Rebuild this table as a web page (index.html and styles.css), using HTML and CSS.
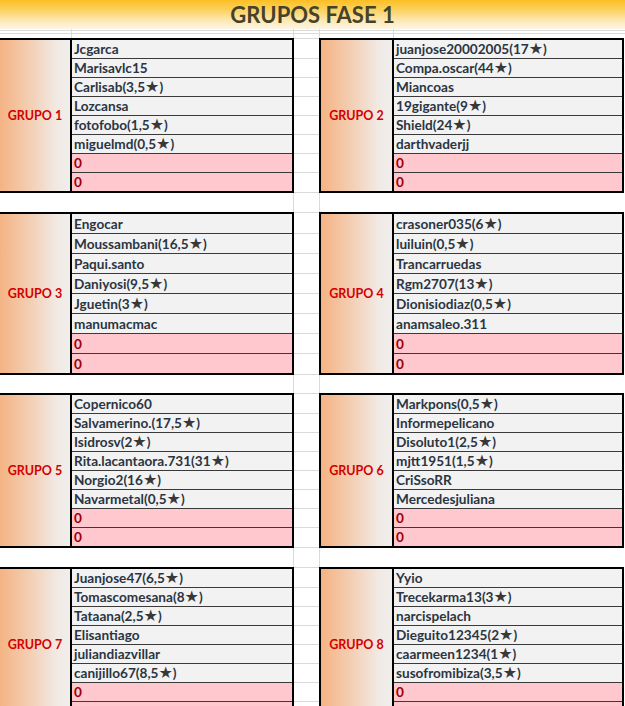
FILE: index.html
```html
<!DOCTYPE html>
<html lang="es">
<head>
<meta charset="utf-8">
<title>Grupos Fase 1</title>
<link rel="stylesheet" href="styles.css">
</head>
<body>
<div class="sheet">
  <div class="title">GRUPOS FASE 1</div>
  <div class="headgrid">
    <div class="hg hg1"></div>
    <div class="hg hg2"></div>
    <div class="hg hg3"></div>
  </div>

  <div class="band r19">
    <div class="block left">
      <div class="label">GRUPO 1</div>
      <div class="names">
        <div class="row">Jcgarca</div>
        <div class="row">Marisavlc15</div>
        <div class="row">Carlisab(3,5<span class="star">★</span>)</div>
        <div class="row">Lozcansa</div>
        <div class="row">fotofobo(1,5<span class="star">★</span>)</div>
        <div class="row">miguelmd(0,5<span class="star">★</span>)</div>
        <div class="row zero">0</div>
        <div class="row zero">0</div>
      </div>
    </div>
    <div class="gapcol"><div class="gc"></div><div class="gc"></div><div class="gc"></div><div class="gc"></div><div class="gc"></div><div class="gc"></div><div class="gc"></div><div class="gc"></div></div>
    <div class="block right">
      <div class="label">GRUPO 2</div>
      <div class="names">
        <div class="row">juanjose20002005(17<span class="star">★</span>)</div>
        <div class="row">Compa.oscar(44<span class="star">★</span>)</div>
        <div class="row">Miancoas</div>
        <div class="row">19gigante(9<span class="star">★</span>)</div>
        <div class="row">Shield(24<span class="star">★</span>)</div>
        <div class="row">darthvaderjj</div>
        <div class="row zero">0</div>
        <div class="row zero">0</div>
      </div>
    </div>
  </div>
  <div class="spacer s19"></div>

  <div class="band r20">
    <div class="block left">
      <div class="label">GRUPO 3</div>
      <div class="names">
        <div class="row">Engocar</div>
        <div class="row">Moussambani(16,5<span class="star">★</span>)</div>
        <div class="row">Paqui.santo</div>
        <div class="row">Daniyosi(9,5<span class="star">★</span>)</div>
        <div class="row">Jguetin(3<span class="star">★</span>)</div>
        <div class="row">manumacmac</div>
        <div class="row zero">0</div>
        <div class="row zero">0</div>
      </div>
    </div>
    <div class="gapcol"><div class="gc"></div><div class="gc"></div><div class="gc"></div><div class="gc"></div><div class="gc"></div><div class="gc"></div><div class="gc"></div><div class="gc"></div></div>
    <div class="block right">
      <div class="label">GRUPO 4</div>
      <div class="names">
        <div class="row">crasoner035(6<span class="star">★</span>)</div>
        <div class="row">luiluin(0,5<span class="star">★</span>)</div>
        <div class="row">Trancarruedas</div>
        <div class="row">Rgm2707(13<span class="star">★</span>)</div>
        <div class="row">Dionisiodiaz(0,5<span class="star">★</span>)</div>
        <div class="row">anamsaleo.311</div>
        <div class="row zero">0</div>
        <div class="row zero">0</div>
      </div>
    </div>
  </div>
  <div class="spacer s18"></div>

  <div class="band r19">
    <div class="block left">
      <div class="label">GRUPO 5</div>
      <div class="names">
        <div class="row">Copernico60</div>
        <div class="row">Salvamerino.(17,5<span class="star">★</span>)</div>
        <div class="row">Isidrosv(2<span class="star">★</span>)</div>
        <div class="row">Rita.lacantaora.731(31<span class="star">★</span>)</div>
        <div class="row">Norgio2(16<span class="star">★</span>)</div>
        <div class="row">Navarmetal(0,5<span class="star">★</span>)</div>
        <div class="row zero">0</div>
        <div class="row zero">0</div>
      </div>
    </div>
    <div class="gapcol"><div class="gc"></div><div class="gc"></div><div class="gc"></div><div class="gc"></div><div class="gc"></div><div class="gc"></div><div class="gc"></div><div class="gc"></div></div>
    <div class="block right">
      <div class="label">GRUPO 6</div>
      <div class="names">
        <div class="row">Markpons(0,5<span class="star">★</span>)</div>
        <div class="row">Informepelicano</div>
        <div class="row">Disoluto1(2,5<span class="star">★</span>)</div>
        <div class="row">mjtt1951(1,5<span class="star">★</span>)</div>
        <div class="row">CriSsoRR</div>
        <div class="row">Mercedesjuliana</div>
        <div class="row zero">0</div>
        <div class="row zero">0</div>
      </div>
    </div>
  </div>
  <div class="spacer s19"></div>

  <div class="band r19">
    <div class="block left">
      <div class="label">GRUPO 7</div>
      <div class="names">
        <div class="row">Juanjose47(6,5<span class="star">★</span>)</div>
        <div class="row">Tomascomesana(8<span class="star">★</span>)</div>
        <div class="row">Tataana(2,5<span class="star">★</span>)</div>
        <div class="row">Elisantiago</div>
        <div class="row">juliandiazvillar</div>
        <div class="row">canijillo67(8,5<span class="star">★</span>)</div>
        <div class="row zero">0</div>
        <div class="row zero">0</div>
      </div>
    </div>
    <div class="gapcol"><div class="gc"></div><div class="gc"></div><div class="gc"></div><div class="gc"></div><div class="gc"></div><div class="gc"></div><div class="gc"></div><div class="gc"></div></div>
    <div class="block right">
      <div class="label">GRUPO 8</div>
      <div class="names">
        <div class="row">Yyio</div>
        <div class="row">Trecekarma13(3<span class="star">★</span>)</div>
        <div class="row">narcispelach</div>
        <div class="row">Dieguito12345(2<span class="star">★</span>)</div>
        <div class="row">caarmeen1234(1<span class="star">★</span>)</div>
        <div class="row">susofromibiza(3,5<span class="star">★</span>)</div>
        <div class="row zero">0</div>
        <div class="row zero">0</div>
      </div>
    </div>
  </div>
</div>
</body>
</html>
```

FILE: styles.css
```css
html, body {
  margin: 0;
  padding: 0;
  overflow: hidden;
  background: #fff;
}

.sheet {
  width: 625px;
  height: 706px;
  overflow: hidden;
  font-family: Lato, "Liberation Sans", sans-serif;
  background:
    linear-gradient(#dadada, #dadada) 293px 0 / 1px 100% no-repeat,
    linear-gradient(#dadada, #dadada) 319px 0 / 1px 100% no-repeat,
    #fff;
}

.title {
  height: 29px;
  display: flex;
  align-items: center;
  justify-content: center;
  background: linear-gradient(#fbbf22 0%, #fbd260 35%, #fde8b4 70%, #fdf6e6 100%);
  color: #46422a;
  font-weight: 700;
  font-size: 22px;
  line-height: 29px;
}

.headgrid {
  height: 9px;
  background:
    linear-gradient(#dadada, #dadada) 71px 0 / 1px 100% no-repeat,
    linear-gradient(#dadada, #dadada) 293px 0 / 1px 100% no-repeat,
    linear-gradient(#dadada, #dadada) 319px 0 / 1px 100% no-repeat,
    linear-gradient(#dadada, #dadada) 393px 0 / 1px 100% no-repeat;
}

.hg { box-sizing: border-box; }
.hg1 { height: 2px; border-bottom: 1px solid #dadada; }
.hg2 { height: 3px; border-bottom: 1px solid #dadada; }
.hg3 { height: 4px; }

.band {
  display: flex;
}
.r19 { --rh: 19px; }
.r20 { --rh: 20px; }

.s19 { height: 19px; }
.s18 { height: 18px; }

.block {
  display: flex;
  box-sizing: border-box;
  border-top: 2px solid #000;
  border-bottom: 2px solid #000;
  border-right: 2px solid #000;
}
.block.left { width: 294px; }
.block.right { width: 305px; border-left: 2px solid #000; }

.label {
  box-sizing: border-box;
  border-right: 2px solid #000;
  background: linear-gradient(to right, #f5b384 0%, #f3d0b6 45%, #f1e9e3 80%, #f0eeec 100%);
  display: flex;
  align-items: center;
  justify-content: center;
  color: #d40000;
  font-size: 12.5px;
  font-weight: 700;
}
.block.left .label { width: 72px; }
.block.right .label { width: 73px; }

.names {
  flex: 1;
  display: flex;
  flex-direction: column;
}

.row {
  box-sizing: border-box;
  height: var(--rh);
  border-bottom: 1px solid #3a3a3a;
  background: #f2f2f2;
  color: #2b3542;
  font-size: 13.6px;
  font-weight: 700;
  line-height: 16px;
  padding: 0 0 1px 2px;
  display: flex;
  align-items: flex-end;
  white-space: nowrap;
}
.row:last-child {
  height: calc(var(--rh) - 1px);
  border-bottom: 0;
}
.row.zero {
  background: #ffc7ce;
  color: #9c0006;
}

.star {
  font-family: "DejaVu Sans", sans-serif;
  color: #383838;
  font-size: 16px;
  line-height: 16px;
}

.gapcol {
  width: 25px;
  box-sizing: border-box;
  border-top: 1px solid #dadada;
  border-bottom: 1px solid #dadada;
  display: flex;
  flex-direction: column;
}
.gc {
  box-sizing: border-box;
  height: var(--rh);
  border-bottom: 1px solid #dadada;
}
.gc:first-child { height: calc(var(--rh) + 1px); }
.gc:last-child { border-bottom: 0; }
```
